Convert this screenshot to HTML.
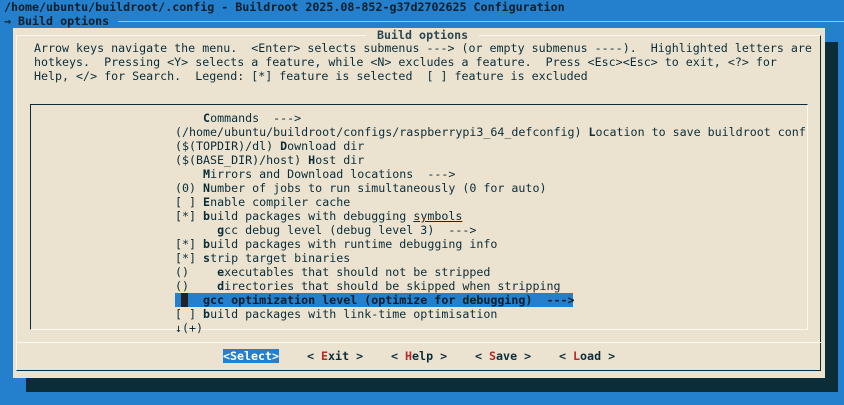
<!DOCTYPE html>
<html><head><meta charset="utf-8"><style>
*{margin:0;padding:0}
html,body{width:844px;height:405px;overflow:hidden;background:#2480cc;}
body{position:relative;font-family:"DejaVu Sans Mono","Liberation Mono",monospace;font-size:11.65px;color:#0b2d3a;}
.r{position:absolute;white-space:pre;line-height:14px;height:14px;}
.b{font-weight:bold}
.k{color:#b52a2a;font-weight:bold}
.abs{position:absolute}
</style></head><body>
<div class="r b" style="left:4px;top:0px;color:#0b1e2a">/home/ubuntu/buildroot/.config - Buildroot 2025.08-852-g37d2702625 Configuration</div>
<div class="r b" style="left:4px;top:14px;color:#0b1e2a">→ Build options</div>
<div class="abs" style="left:118px;top:21px;width:726px;height:1px;background:#9cc3e6"></div>
<div class="abs" style="left:26px;top:42px;width:812px;height:350px;background:#0b2d3a"></div>
<div class="abs" style="left:13px;top:28px;width:812px;height:350px;background:#ebe3d0"></div>
<div class="abs" style="left:16px;top:35px;width:805px;height:336px;border-left:1px solid #fffaf0;border-top:1px solid #fffaf0;border-right:1px solid #0b2d3a;border-bottom:1px solid #0b2d3a;box-sizing:border-box"></div>
<div class="abs" style="left:17px;top:342px;width:804px;height:1px;background:#fffaf0"></div>
<div class="r b" style="left:366px;top:28px;background:#ebe3d0;padding:0 4px;color:#2d4750"> Build options </div>
<div class="r" style="left:34px;top:41px">Arrow keys navigate the menu.  &lt;Enter&gt; selects submenus ---&gt; (or empty submenus ----).  Highlighted letters are</div>
<div class="r" style="left:34px;top:55px">hotkeys.  Pressing &lt;Y&gt; selects a feature, while &lt;N&gt; excludes a feature.  Press &lt;Esc&gt;&lt;Esc&gt; to exit, &lt;?&gt; for</div>
<div class="r" style="left:34px;top:69px">Help, &lt;/&gt; for Search.  Legend: [*] feature is selected  [ ] feature is excluded</div>
<div class="abs" style="left:30px;top:104px;width:778px;height:226px;border-left:1px solid #0b2d3a;border-top:1px solid #0b2d3a;border-right:1px solid #fffaf0;border-bottom:1px solid #fffaf0;box-sizing:border-box"></div>
<div class="r" style="left:175px;top:111px">    <span class="b">C</span>ommands  ---&gt;</div>
<div class="r" style="left:175px;top:125px">(/home/ubuntu/buildroot/configs/raspberrypi3_64_defconfig) <span class="b">L</span>ocation to save buildroot conf</div>
<div class="r" style="left:175px;top:139px">($(TOPDIR)/dl) <span class="b">D</span>ownload dir</div>
<div class="r" style="left:175px;top:153px">($(BASE_DIR)/host) <span class="b">H</span>ost dir</div>
<div class="r" style="left:175px;top:167px">    <span class="b">M</span>irrors and Download locations  ---&gt;</div>
<div class="r" style="left:175px;top:181px">(0) <span class="b">N</span>umber of jobs to run simultaneously (0 for auto)</div>
<div class="r" style="left:175px;top:195px">[ ] <span class="b">E</span>nable compiler cache</div>
<div class="r" style="left:175px;top:209px">[*] <span class="b">b</span>uild packages with debugging <span style="text-decoration:underline">symbols</span></div>
<div class="r" style="left:175px;top:223px">      <span class="b">g</span>cc debug level (debug level 3)  ---&gt;</div>
<div class="r" style="left:175px;top:237px">[*] <span class="b">b</span>uild packages with runtime debugging info</div>
<div class="r" style="left:175px;top:251px">[*] <span class="b">s</span>trip target binaries</div>
<div class="r" style="left:175px;top:265px">()    <span class="b">e</span>xecutables that should not be stripped</div>
<div class="r" style="left:175px;top:279px">()    <span class="b">d</span>irectories that should be skipped when stripping</div>
<div class="abs" style="left:175px;top:293px;width:398px;height:14px;background:#2480cc"></div>
<div class="abs" style="left:181px;top:293px;width:7px;height:14px;background:#222"></div>
<div class="r b" style="left:175px;top:293px;color:#0b1e2a">    gcc optimization level (optimize for debugging)  ---&gt;</div>
<div class="r" style="left:175px;top:307px">[ ] <span class="b">b</span>uild packages with link-time optimisation</div>
<div class="r" style="left:175px;top:321px">↓(+)</div>
<div class="r b" style="left:223px;top:349px;background:#2480cc;color:#fff">&lt;Select&gt;</div>
<div class="r b" style="left:307px;top:349px">&lt; <span class="k">E</span>xit &gt;</div>
<div class="r b" style="left:391px;top:349px">&lt; <span class="k">H</span>elp &gt;</div>
<div class="r b" style="left:475px;top:349px">&lt; <span class="k">S</span>ave &gt;</div>
<div class="r b" style="left:559px;top:349px">&lt; <span class="k">L</span>oad &gt;</div>
</body></html>
